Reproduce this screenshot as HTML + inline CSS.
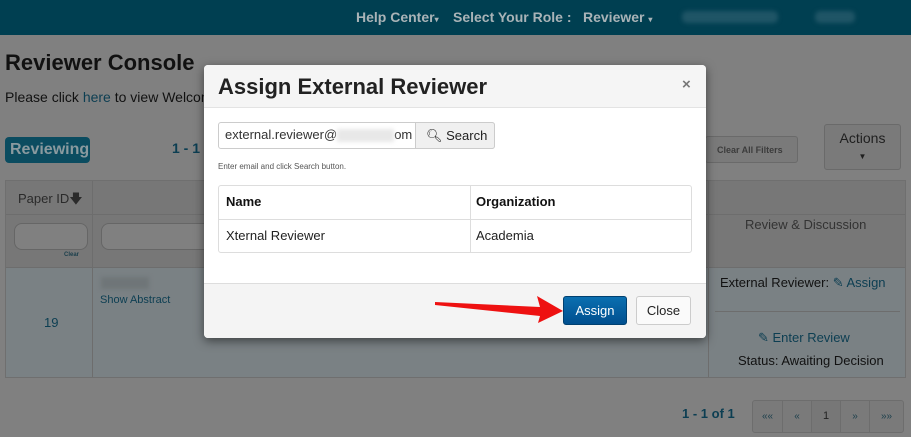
<!DOCTYPE html>
<html><head><style>
*{box-sizing:border-box;margin:0;padding:0}
body{width:911px;height:437px;overflow:hidden;background:#808080;font-family:"Liberation Sans",sans-serif;position:relative;color:#111}
.a{position:absolute}
.nav{left:0;top:0;width:911px;height:35px;background:#003f51}
.nav span{position:absolute;top:9px;font-size:14px;font-weight:bold;color:#a9b3b7}
.blur{position:absolute;top:11px;height:12px;background:#1f5566;border-radius:5px;filter:blur(2px)}
.tbl{left:5px;top:180px;width:901px;height:198px;border:1px solid #6f6f6f;background:#7a7a7a}
.modal{left:204px;top:65px;width:502px;height:273px;background:#fff;border-radius:4px;box-shadow:0 3px 10px rgba(0,0,0,.5);overflow:hidden}
.teal{color:#0c3e52}
</style></head><body>
<div class="a nav">
<span style="left:356px">Help Center<small style="font-size:8px">▾</small></span>
<span style="left:453px">Select Your Role :</span>
<span style="left:583px">Reviewer <small style="font-size:8px">▾</small></span>
<div class="blur" style="left:682px;width:96px"></div>
<div class="blur" style="left:815px;width:40px"></div>
</div>
<div class="a" style="left:5px;top:50px;font-size:22px;font-weight:bold;color:#111">Reviewer Console</div>
<div class="a" style="left:5px;top:89px;font-size:14px;color:#111">Please click <span class="teal">here</span> to view Welcome</div>
<div class="a" style="left:5px;top:137px;width:85px;height:26px;background:#0b4c60;border-radius:4px;color:#8a9a9f;font-size:16px;font-weight:bold;padding:4px 0 0 5px">Reviewing</div>
<div class="a teal" style="left:172px;top:140px;font-size:14px;font-weight:bold">1 - 1</div>
<div class="a" style="left:705px;top:136px;width:93px;height:27px;border:1px solid #6a6a6a;border-radius:3px;background:#7a7a7a;font-size:9px;font-weight:bold;color:#3c3c3c;padding:8px 0 0 11px">Clear All Filters</div>
<div class="a" style="left:824px;top:124px;width:77px;height:46px;border:1px solid #6a6a6a;border-radius:3px;background:#7a7a7a;font-size:14px;color:#1f1f1f;text-align:center;padding-top:5px">Actions<br><span style="font-size:8px">▼</span></div>
<div class="a tbl">
 <div class="a" style="left:0;top:0;width:899px;height:86px;background:#777"></div>
 <div class="a" style="left:0;top:86px;width:899px;height:110px;background:#7a8184"></div>
 <div class="a" style="left:86px;top:0;width:1px;height:196px;background:#6d6d6d"></div>
 <div class="a" style="left:0;top:33px;width:899px;height:1px;background:#6d6d6d"></div>
 <div class="a" style="left:0;top:86px;width:899px;height:1px;background:#6d6d6d"></div>
 <div class="a" style="left:702px;top:0;width:1px;height:196px;background:#6d6d6d"></div>
 <div class="a" style="left:12px;top:9px;font-size:13px;color:#2a2a2a">Paper ID🡇</div>
 <div class="a" style="left:8px;top:42px;width:74px;height:27px;border:1px solid #666;border-radius:8px;background:#808080"></div>
 <div class="a" style="left:58px;top:71px;font-size:6px;color:#1b3f4c;font-weight:bold">Clear</div>
 <div class="a" style="left:95px;top:42px;width:120px;height:27px;border:1px solid #666;border-radius:8px;background:#808080"></div>
 <div class="a teal" style="left:38px;top:134px;font-size:13px">19</div>
 <div class="a" style="left:95px;top:96px;width:48px;height:12px;background:#6f7578;filter:blur(2px)"></div>
 <div class="a teal" style="left:94px;top:113px;font-size:11px">Show Abstract</div>
 <div class="a" style="left:739px;top:36px;font-size:13px;color:#333">Review &amp; Discussion</div>
 <div class="a" style="left:714px;top:94px;font-size:13px;color:#111">External Reviewer: <span class="teal">✎ Assign</span></div>
 <div class="a" style="left:709px;top:130px;width:185px;height:1px;background:#6d6d6d"></div>
 <div class="a teal" style="left:752px;top:149px;font-size:13px">✎ Enter Review</div>
 <div class="a" style="left:732px;top:172px;font-size:13px;color:#111">Status: Awaiting Decision</div>
</div>
<div class="a teal" style="left:682px;top:406px;font-size:13px;font-weight:bold">1 - 1 of 1</div>
<div class="a" style="left:752px;top:400px;width:152px;height:33px;border:1px solid #6d6d6d;border-radius:3px;background:#7a7a7a;font-size:10px;color:#1b3f4c;display:flex">
 <div style="width:30px;text-align:center;padding-top:10px;border-right:1px solid #6d6d6d">««</div>
 <div style="width:29px;text-align:center;padding-top:10px;border-right:1px solid #6d6d6d">«</div>
 <div style="width:29px;text-align:center;padding-top:9px;border-right:1px solid #6d6d6d;background:#777;color:#222;font-size:11px">1</div>
 <div style="width:29px;text-align:center;padding-top:10px;border-right:1px solid #6d6d6d">»</div>
 <div style="flex:1;text-align:center;padding-top:10px">»»</div>
</div>
<div class="a modal">
 <div class="a" style="left:0;top:0;width:502px;height:43px;background:#f5f5f5;border-bottom:1px solid #e3e3e3"></div>
 <div class="a" style="left:14px;top:9px;font-size:22px;font-weight:bold;color:#222">Assign External Reviewer</div>
 <div class="a" style="left:478px;top:11px;font-size:15px;font-weight:bold;color:#777">×</div>
 <div class="a" style="left:14px;top:57px;width:277px;height:27px;border:1px solid #ccc;border-radius:3px"></div>
 <div class="a" style="left:21px;top:62px;font-size:13px;color:#333">external.reviewer@<span style="display:inline-block;width:57px;height:13px;background:#e8e8e8;filter:blur(2px);vertical-align:middle"></span>om</div>
 <div class="a" style="left:211px;top:57px;width:80px;height:27px;border:1px solid #ccc;border-radius:0 3px 3px 0;background:#f0f0f0;font-size:13px;color:#222;padding:5px 0 0 10px">&#128269;&#xFE0E; Search</div>
 <div class="a" style="left:14px;top:97px;font-size:8px;color:#555">Enter email and click Search button.</div>
 <div class="a" style="left:14px;top:120px;width:474px;height:68px;border:1px solid #ddd;border-radius:3px">
  <div class="a" style="left:251px;top:0;width:1px;height:66px;background:#ddd"></div>
  <div class="a" style="left:0;top:33px;width:472px;height:1px;background:#ddd"></div>
  <div class="a" style="left:7px;top:8px;font-size:13px;font-weight:bold">Name</div>
  <div class="a" style="left:257px;top:8px;font-size:13px;font-weight:bold">Organization</div>
  <div class="a" style="left:7px;top:42px;font-size:13px;color:#222">Xternal Reviewer</div>
  <div class="a" style="left:257px;top:42px;font-size:13px;color:#222">Academia</div>
 </div>
 <div class="a" style="left:0;top:218px;width:502px;height:55px;background:#f4f4f4;border-top:1px solid #ddd"></div>
 <div class="a" style="left:359px;top:231px;width:64px;height:29px;border-radius:3px;background:linear-gradient(#0a6fb0,#004f8f);border:1px solid #004070;color:#fff;font-size:13px;text-align:center;padding-top:6px">Assign</div>
 <div class="a" style="left:432px;top:231px;width:55px;height:29px;border-radius:3px;background:#fafafa;border:1px solid #ccc;color:#222;font-size:13px;text-align:center;padding-top:6px">Close</div>
</div>
<svg class="a" style="left:0;top:0" width="911" height="437"><polygon points="435,302 540,307 537,296 563,311 538,323 540,316 435,305" fill="#ee1111"/></svg>
</body></html>
